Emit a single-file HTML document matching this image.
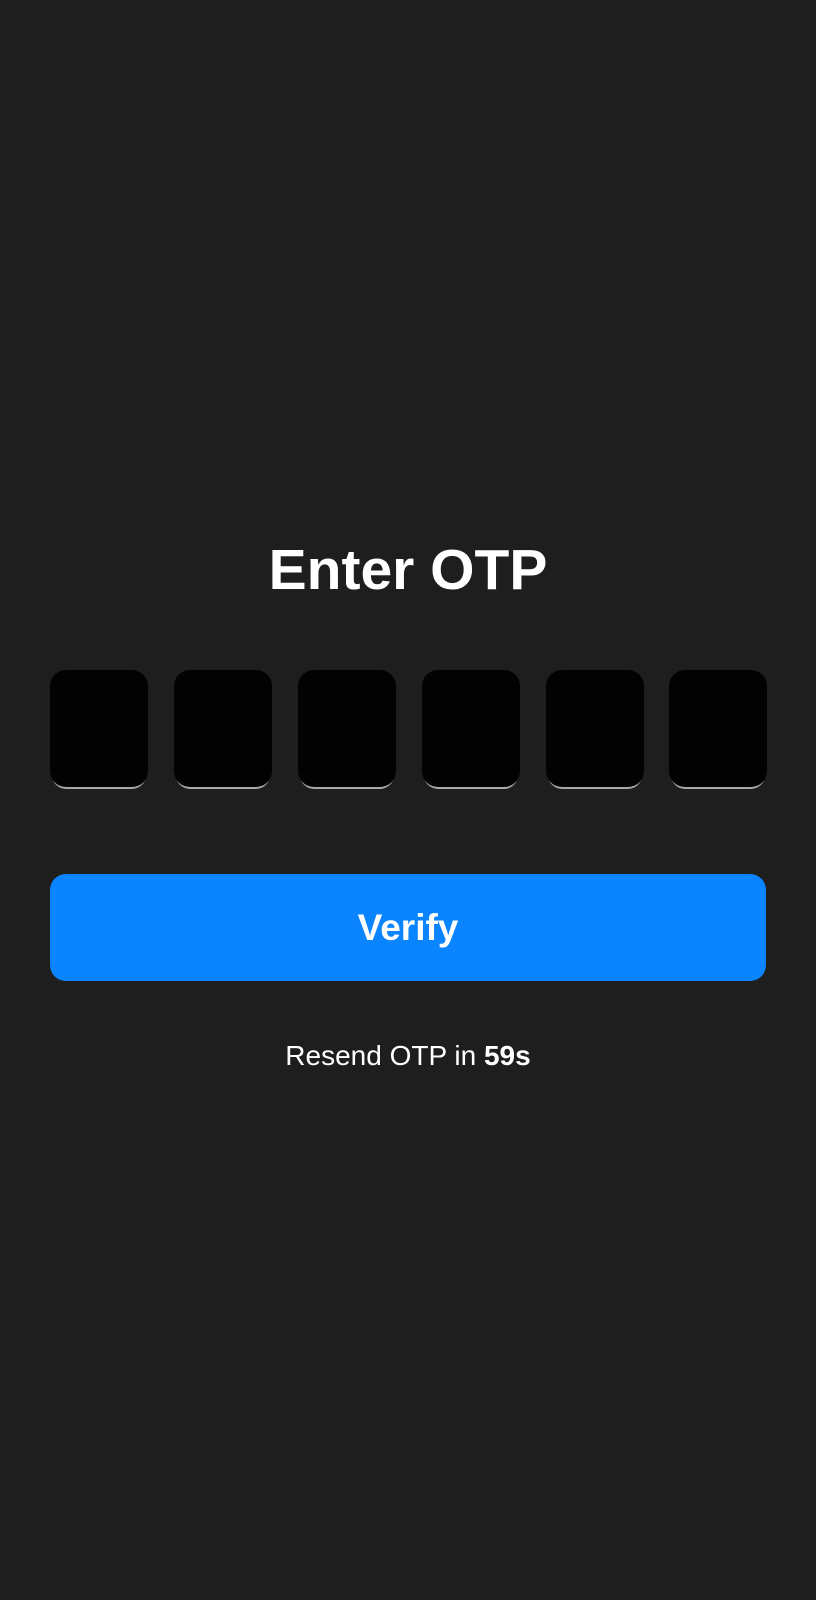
<!DOCTYPE html>
<html><head><style>
html,body{margin:0;padding:0;}
body{width:816px;height:1600px;background:#1e1e1e;position:relative;font-family:"Liberation Sans",sans-serif;color:#fff;overflow:hidden;}
.t{position:absolute;left:0;width:816px;text-align:center;top:535px;font-size:57px;font-weight:bold;line-height:70px;}
.b{position:absolute;top:670px;width:98px;height:117px;background:#020202;border-radius:16px;box-shadow:0 4px 0 -2px #a8a8a8;}
.v{position:absolute;left:50px;top:874px;width:716px;height:107px;background:#0a84ff;border-radius:16px;text-align:center;line-height:107px;font-size:37px;font-weight:bold;}
.r{position:absolute;left:0;width:816px;text-align:center;top:1038px;font-size:28px;line-height:36px;}
</style></head><body>
<div class="t">Enter OTP</div>
<div class="b" style="left:50px"></div>
<div class="b" style="left:174px"></div>
<div class="b" style="left:298px"></div>
<div class="b" style="left:422px"></div>
<div class="b" style="left:546px"></div>
<div class="b" style="left:669px"></div>
<div class="v">Verify</div>
<div class="r">Resend OTP in <b>59s</b></div>
</body></html>
